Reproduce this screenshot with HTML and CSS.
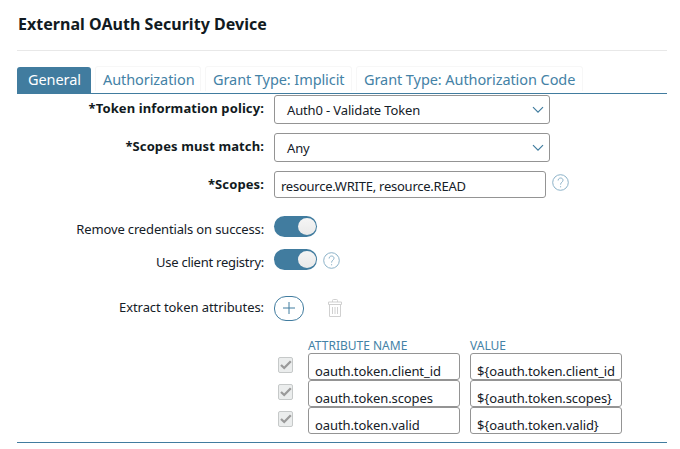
FILE: index.html
```html
<!DOCTYPE html>
<html lang="en">
<head>
<meta charset="utf-8">
<title>External OAuth Security Device</title>
<link rel="stylesheet" href="styles.css">
</head>
<body>
<svg class="symbols" aria-hidden="true">
  <symbol id="chevron" viewBox="0 0 12 8"><path d="M1 1.2 6 6.2 11 1.2"/></symbol>
  <symbol id="help" viewBox="0 0 17 17"><circle cx="8.5" cy="8.5" r="7.8"/><path d="M6.1 6.5C6.1 3.2 11 3.3 11 6.2 11 8.2 8.6 8.1 8.6 10.6M8.6 12.2v1.1"/></symbol>
  <symbol id="check" viewBox="0 0 15 16"><path d="M3 8 6.2 11 12.8 4.2"/></symbol>
</svg>
<main class="panel">
  <h1 class="title">External OAuth Security Device</h1>
  <nav class="tabs">
    <a class="tab tab-general active">General</a>
    <a class="tab tab-auth">Authorization</a>
    <a class="tab tab-implicit">Grant Type: Implicit</a>
    <a class="tab tab-code">Grant Type: Authorization Code</a>
  </nav>
  <form class="form">
    <div class="row row-select">
      <label class="label required">*Token information policy:</label>
      <div class="select"><span>Auth0 - Validate Token</span><svg class="chevron"><use href="#chevron"/></svg></div>
    </div>
    <div class="row row-select">
      <label class="label required">*Scopes must match:</label>
      <div class="select"><span>Any</span><svg class="chevron"><use href="#chevron"/></svg></div>
    </div>
    <div class="row row-scopes">
      <label class="label required">*Scopes:</label>
      <div class="input scopes">resource.WRITE, resource.READ</div>
      <svg class="help"><use href="#help"/></svg>
    </div>
    <div class="row row-toggle">
      <label class="label">Remove credentials on success:</label>
      <div class="toggle"></div>
    </div>
    <div class="row row-toggle">
      <label class="label label-registry">Use client registry:</label>
      <div class="toggle"></div>
      <svg class="help"><use href="#help"/></svg>
    </div>
    <div class="row row-extract">
      <label class="label">Extract token attributes:</label>
      <div class="add"><svg viewBox="0 0 12 12"><path d="M6 0v12M0 6h12"/></svg></div>
      <svg class="trash" viewBox="0 0 14 19"><path d="M.5 3h13v2.5H.5zM4.5 3V1.5q0-1 1-1h3q1 0 1 1V3M1.5 5.5v12h11v-12M4.5 8v7M7 8v7M9.5 8v7"/></svg>
    </div>
    <div class="attributes">
      <span></span><span class="head">ATTRIBUTE NAME</span><span class="head">VALUE</span>
      <div class="check"><svg><use href="#check"/></svg></div><div class="input">oauth.token.client_id</div><div class="input">${oauth.token.client_id</div>
      <div class="check"><svg><use href="#check"/></svg></div><div class="input">oauth.token.scopes</div><div class="input">${oauth.token.scopes}</div>
      <div class="check"><svg><use href="#check"/></svg></div><div class="input">oauth.token.valid</div><div class="input">${oauth.token.valid}</div>
    </div>
  </form>
</main>
</body>
</html>
```

FILE: styles.css
```css
* { box-sizing: border-box; }
body {
  margin: 0;
  background: #fff;
  color: #152028;
  font: 13px/18px "Noto Sans", sans-serif;
}
svg { display: block; fill: none; }
.symbols { display: none; }
.panel { width: 650px; margin-left: 17px; }
.title {
  height: 51px;
  margin: 0 0 15px;
  padding: 13px 0 0 1px;
  border-bottom: 1px solid #e8e8e8;
  color: #111a21;
  font-size: 16px;
  line-height: 22px;
  letter-spacing: .03px;
}
.tabs {
  display: flex;
  gap: 4px;
  height: 28px;
  border-bottom: 1px solid #417c9f;
}
.tab {
  height: 25px;
  padding-left: 7px;
  border: 1px solid #f7f7f7;
  border-bottom: 0;
  border-radius: 3px 3px 0 0;
  color: #4482a6;
  font-size: 14.5px;
  line-height: 25px;
  letter-spacing: -.08px;
  white-space: nowrap;
}
.tab-general { width: 74px; }
.tab-auth { width: 106px; }
.tab-implicit { width: 147px; }
.tab-code { width: 227px; }
.tab.active {
  height: 26px;
  margin-top: 1px;
  padding-left: 11px;
  border: 0;
  background: #417c9f;
  color: #fff;
  line-height: 25px;
}
.form {
  height: 349px;
  padding-top: 1px;
  border-bottom: 1px solid #417c9f;
}
.row { display: flex; align-items: flex-start; }
.label {
  width: 247px;
  margin-right: 10px;
  letter-spacing: -.15px;
  text-align: right;
}
.label-registry { letter-spacing: -.25px; }
.required {
  padding-top: 4px;
  color: #111a21;
  font-weight: 700;
  letter-spacing: .11px;
}
.row-select { height: 38px; }
.select {
  display: flex;
  align-items: center;
  justify-content: space-between;
  width: 276px;
  height: 29px;
  padding: 1px 5px 0 12px;
  border: 1px solid #949494;
  border-radius: 3px;
  letter-spacing: -.14px;
}
.chevron { width: 12px; height: 8px; stroke: #417c9f; stroke-width: 1.2; }
.input {
  height: 27px;
  padding: 8px 0 0 6px;
  border: 1px solid #949494;
  border-radius: 3px;
  line-height: 18px;
  letter-spacing: -.1px;
  white-space: nowrap;
}
.row-scopes { height: 45px; }
.scopes { width: 272px; padding-top: 5px; letter-spacing: -.24px; }
.help { width: 17px; height: 17px; margin: 3px 0 0 6px; stroke: #7fa9c2; stroke-width: .9; }
.row-toggle { height: 33px; }
.row-toggle .label { padding-top: 4px; }
.toggle {
  width: 43px;
  height: 21px;
  padding: 2px 1px 0 24px;
  border-radius: 11px;
  background: #417c9f;
}
.toggle::before {
  content: "";
  display: block;
  width: 18px;
  height: 17px;
  border-radius: 50%;
  background: linear-gradient(#f5f5f5, #e9e9e9);
}
.row-extract { height: 41px; margin-top: 14px; }
.row-extract .label { padding-top: 2px; letter-spacing: -.08px; }
.add {
  display: grid;
  place-items: center;
  width: 30px;
  height: 25px;
  padding: 0 1px 1px 0;
  border: 1px solid #417c9f;
  border-radius: 12px;
}
.add svg { width: 12px; height: 12px; stroke: #417c9f; }
.trash { width: 14px; height: 19px; margin: 3px 0 0 24px; stroke: #d0d0d0; }
.attributes {
  display: grid;
  grid-template-columns: 20px 152px 152px;
  grid-template-rows: 16px repeat(3, 27px);
  column-gap: 10px;
  margin-left: 261px;
}
.head { color: #4482a6; font-size: 12px; line-height: 18px; }
.check {
  width: 15px;
  height: 16px;
  margin-top: 4px;
  border: 1px solid #c6c9c9;
  border-radius: 2px;
  background: #ebeded;
}
.check svg { width: 15px; height: 16px; margin: -1px; stroke: #9a9a9a; stroke-width: 2.3; }
```
